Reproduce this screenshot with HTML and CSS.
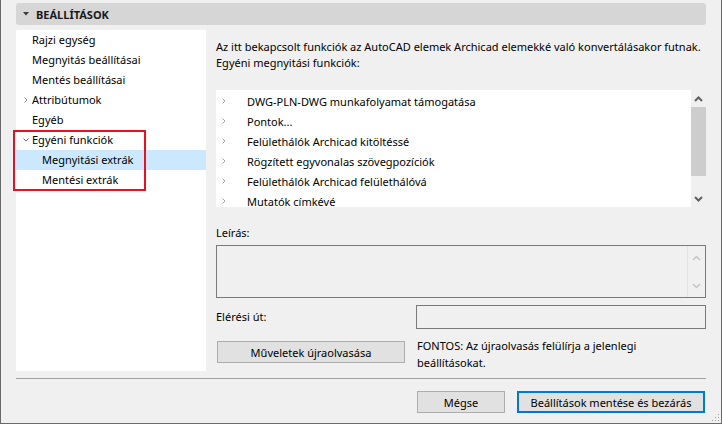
FILE: index.html
```html
<!DOCTYPE html>
<html lang="hu">
<head>
<meta charset="utf-8">
<title>Beállítások</title>
<link rel="stylesheet" href="styles.css">
</head>
<body>
<div class="window">
  <div class="header">
    <svg class="hdr-tri" width="6" height="4" viewBox="0 0 6 4"><path d="M0 0H6L3 3.5Z" fill="#3a3a3a"/></svg>
    <span class="hdr-title">BEÁLLÍTÁSOK</span>
  </div>

  <div class="main">
    <div class="tree">
      <div class="tree-row"><span class="tw"></span>Rajzi egység</div>
      <div class="tree-row"><span class="tw"></span>Megnyitás beállításai</div>
      <div class="tree-row"><span class="tw"></span>Mentés beállításai</div>
      <div class="tree-row"><span class="tw"><svg width="4" height="6" viewBox="0 0 4 6"><path d="M0.5 0.5L3 3L0.5 5.5" fill="none" stroke="#8c8c8c" stroke-width="1"/></svg></span>Attribútumok</div>
      <div class="tree-row"><span class="tw"></span>Egyéb</div>
      <div class="tree-row"><span class="tw"><svg width="6" height="4" viewBox="0 0 6 4"><path d="M0.5 0.5L3 3L5.5 0.5" fill="none" stroke="#6c6c6c" stroke-width="1"/></svg></span>Egyéni funkciók</div>
      <div class="tree-row child selected"><span class="tw"></span>Megnyitási extrák</div>
      <div class="tree-row child"><span class="tw"></span>Mentési extrák</div>
      <div class="red-box"></div>
    </div>

    <div class="content">
      <p class="intro">Az itt bekapcsolt funkciók az AutoCAD elemek Archicad elemekké való konvertálásakor futnak.<br>Egyéni megnyitási funkciók:</p>

      <div class="listbox">
        <div class="list-items">
          <div class="list-row"><span class="lc"><svg width="4" height="6" viewBox="0 0 4 6"><path d="M0.5 0.5L3 3L0.5 5.5" fill="none" stroke="#a6a6a6" stroke-width="1"/></svg></span>DWG-PLN-DWG munkafolyamat támogatása</div>
          <div class="list-row"><span class="lc"><svg width="4" height="6" viewBox="0 0 4 6"><path d="M0.5 0.5L3 3L0.5 5.5" fill="none" stroke="#a6a6a6" stroke-width="1"/></svg></span>Pontok...</div>
          <div class="list-row"><span class="lc"><svg width="4" height="6" viewBox="0 0 4 6"><path d="M0.5 0.5L3 3L0.5 5.5" fill="none" stroke="#a6a6a6" stroke-width="1"/></svg></span>Felülethálók Archicad kitöltéssé</div>
          <div class="list-row"><span class="lc"><svg width="4" height="6" viewBox="0 0 4 6"><path d="M0.5 0.5L3 3L0.5 5.5" fill="none" stroke="#a6a6a6" stroke-width="1"/></svg></span>Rögzített egyvonalas szövegpozíciók</div>
          <div class="list-row"><span class="lc"><svg width="4" height="6" viewBox="0 0 4 6"><path d="M0.5 0.5L3 3L0.5 5.5" fill="none" stroke="#a6a6a6" stroke-width="1"/></svg></span>Felülethálók Archicad felülethálóvá</div>
          <div class="list-row"><span class="lc"><svg width="4" height="6" viewBox="0 0 4 6"><path d="M0.5 0.5L3 3L0.5 5.5" fill="none" stroke="#a6a6a6" stroke-width="1"/></svg></span>Mutatók címkévé</div>
        </div>
        <div class="vscroll">
          <svg class="sarrow" width="9" height="6" viewBox="0 0 9 6"><path d="M1 5L4.5 1.5L8 5" fill="none" stroke="#606060" stroke-width="2"/></svg>
          <div class="thumb-track"><div class="thumb"></div></div>
          <svg class="sarrow" width="9" height="6" viewBox="0 0 9 6"><path d="M1 1L4.5 4.5L8 1" fill="none" stroke="#606060" stroke-width="2"/></svg>
        </div>
      </div>

      <div class="label leiras">Leírás:</div>
      <div class="descbox">
        <div class="desc-text"></div>
        <div class="desc-scroll">
          <svg width="9" height="6" viewBox="0 0 9 6"><path d="M1 5L4.5 1.5L8 5" fill="none" stroke="#c4c4c4" stroke-width="1.5"/></svg>
          <svg width="9" height="6" viewBox="0 0 9 6"><path d="M1 1L4.5 4.5L8 1" fill="none" stroke="#c4c4c4" stroke-width="1.5"/></svg>
        </div>
      </div>

      <div class="path-row">
        <div class="label">Elérési út:</div>
        <div class="path-input"></div>
      </div>

      <div class="reload-row">
        <button class="btn reload">Műveletek újraolvasása</button>
        <p class="note">FONTOS: Az újraolvasás felülírja a jelenlegi<br>beállításokat.</p>
      </div>
    </div>
  </div>

  <div class="separator"></div>

  <div class="footer">
    <button class="btn cancel">Mégse</button>
    <button class="btn primary">Beállítások mentése és bezárás</button>
  </div>

  <svg class="grip" width="10" height="10" viewBox="0 0 10 10">
    <rect x="8" y="2" width="1" height="1" fill="#a0a0a0"/>
    <rect x="5" y="5" width="1" height="1" fill="#a0a0a0"/>
    <rect x="8" y="5" width="1" height="1" fill="#a0a0a0"/>
    <rect x="2" y="8" width="1" height="1" fill="#a0a0a0"/>
    <rect x="5" y="8" width="1" height="1" fill="#a0a0a0"/>
    <rect x="8" y="8" width="1" height="1" fill="#a0a0a0"/>
  </svg>
</div>
</body>
</html>
```
FILE: styles.css
```css
* { box-sizing: border-box; }
html, body { margin: 0; padding: 0; }
body {
  background: #f0f0f0;
  font-family: "Noto Sans", "Open Sans", sans-serif;
  font-size: 11px;
  color: #000;
}
.window {
  position: relative;
  width: 722px;
  height: 424px;
  border-left: 1px solid #6a6a6a;
  border-right: 1px solid #6a6a6a;
  border-bottom: 1px solid #6a6a6a;
  padding: 3px 15px 0 15px;
  background: #f0f0f0;
}
.header {
  height: 22px;
  background: #d6d6d6;
  border-radius: 3px;
  display: flex;
  align-items: center;
  padding-left: 7px;
}
.hdr-tri { margin-right: 7px; }
.hdr-title {
  font-weight: 700;
  font-size: 11px;
  color: #1a1a1a;
}
.main {
  margin-top: 5px;
  display: grid;
  grid-template-columns: 190px 490px;
  column-gap: 10px;
  height: 337px;
}
.tree {
  position: relative;
  background: #fff;
}
.tree-row {
  height: 20px;
  line-height: 20px;
  display: flex;
  align-items: center;
  padding-left: 4px;
  white-space: nowrap;
}
.tree-row .tw {
  width: 12px;
  height: 20px;
  display: flex;
  align-items: center;
  justify-content: center;
}
.tree-row.child { padding-left: 14px; }
.tree-row.selected { background: #cce8ff; }
.red-box {
  position: absolute;
  left: -3px;
  top: 100px;
  width: 133px;
  height: 61px;
  border: 2px solid #e81123;
}
.content {
  display: flex;
  flex-direction: column;
}
.intro {
  margin: 9px 0 0 0;
  line-height: 16px;
  white-space: nowrap;
}
.listbox {
  margin-top: 19px;
  height: 117px;
  display: flex;
}
.list-items {
  flex: 1;
  background: #fff;
  overflow: hidden;
  padding-top: 1px;
}
.list-row {
  height: 20px;
  display: flex;
  align-items: center;
  white-space: nowrap;
}
.list-row .lc {
  width: 31px;
  padding-left: 6px;
  display: flex;
  align-items: center;
}
.vscroll {
  width: 15px;
  background: #f0f0f0;
  display: flex;
  flex-direction: column;
  align-items: center;
}
.sarrow { margin: 6px 0 5px; }
.thumb-track { flex: 1; width: 100%; }
.thumb {
  width: 15px;
  height: 69px;
  background: #cdcdcd;
}
.label { line-height: 16px; }
.leiras { margin-top: 18px; }
.descbox {
  margin-top: 4px;
  height: 53px;
  border: 1px solid #7a7a7a;
  background: #f0f0f0;
  display: flex;
}
.desc-text { flex: 1; }
.desc-scroll {
  width: 18px;
  border-left: 1px solid #e3e3e3;
  display: flex;
  flex-direction: column;
  align-items: center;
  justify-content: space-between;
  padding: 9px 0 8px;
}
.path-row {
  margin-top: 7px;
  display: grid;
  grid-template-columns: 200px 290px;
  align-items: center;
}
.path-input {
  height: 24px;
  border: 1px solid #7a7a7a;
  background: #f0f0f0;
}
.reload-row {
  margin-top: 8px;
  display: grid;
  grid-template-columns: 201px 1fr;
  align-items: start;
}
.btn {
  font-family: inherit;
  font-size: 11px;
  color: #000;
  background: #e1e1e1;
  border: 1px solid #adadad;
  height: 22px;
  padding: 0;
  margin: 0;
}
.reload {
  width: 188px;
  margin: 4px 0 0 1px;
}
.note {
  margin: 0;
  line-height: 17px;
  white-space: nowrap;
}
.separator {
  margin-top: 11px;
  height: 1px;
  background: #a0a0a0;
}
.footer {
  margin-top: 12px;
  display: flex;
  justify-content: flex-end;
  gap: 12px;
  padding-right: 1px;
}
.cancel { width: 88px; }
.primary {
  width: 188px;
  border: 2px solid #0078d7;
}
.grip {
  position: absolute;
  right: 1px;
  bottom: 1px;
}
```
